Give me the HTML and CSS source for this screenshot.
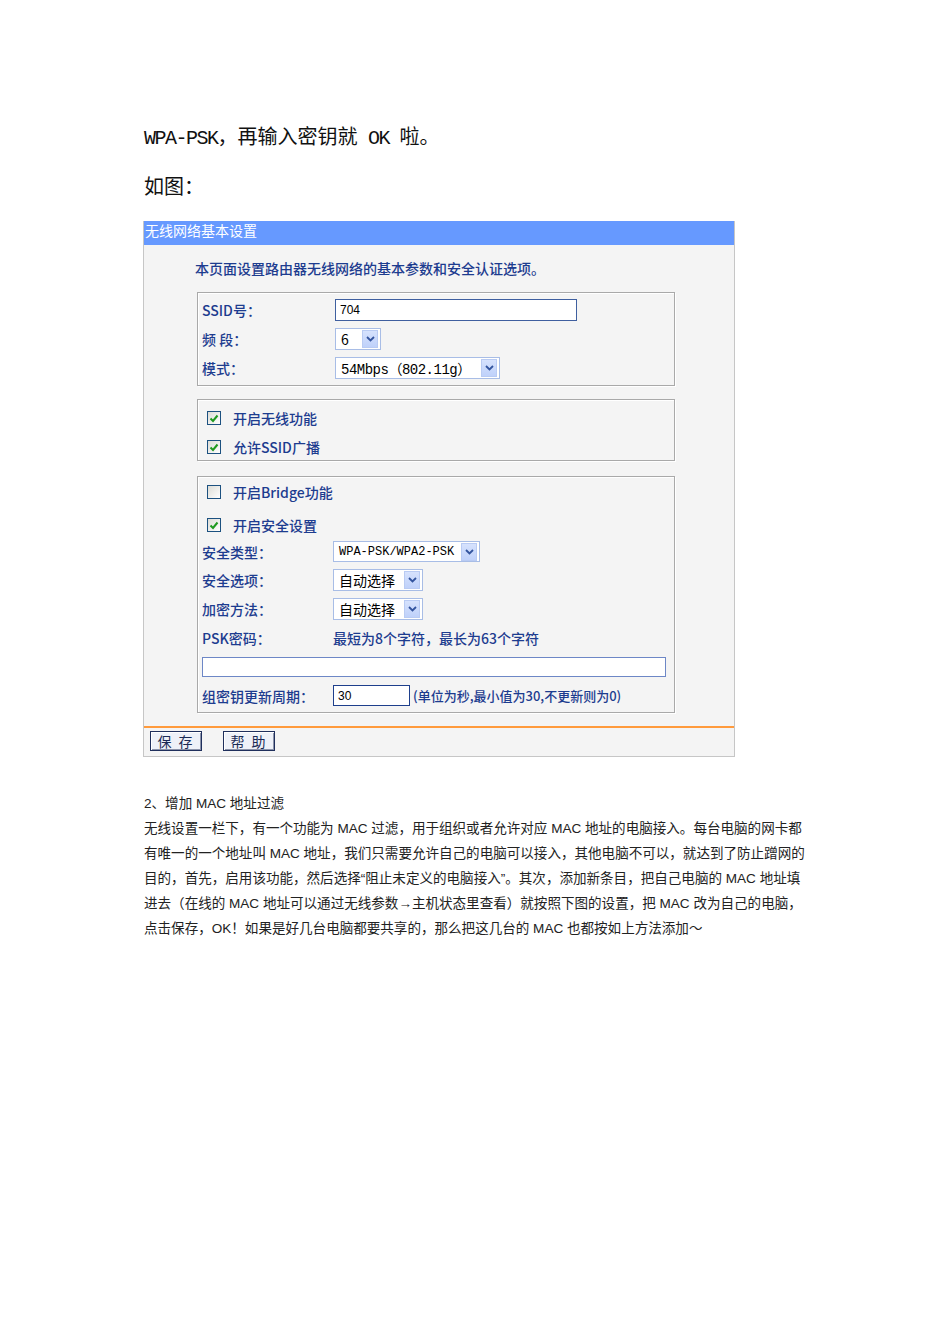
FILE: index.html
```html
<!DOCTYPE html>
<html lang="zh-CN">
<head>
    <meta charset="UTF-8">
    <title>无线网络基本设置</title>
    <link rel="stylesheet" href="styles.css">
</head>
<body>
    <div class="page">
        <p class="lead"><span class="en">WPA-PSK</span>，再输入密钥就<span class="en"> OK </span>啦。</p>
        <p class="lead second">如图：</p>

        <div class="panel">
            <div class="panel-title">无线网络基本设置</div>
            <div class="panel-body">
                <div class="intro">本页面设置路由器无线网络的基本参数和安全认证选项。</div>

                <div class="group group-basic">
                    <div class="row">
                        <span class="label">SSID号：</span>
                        <input class="text-input ssid" type="text" value="704">
                    </div>
                    <div class="row">
                        <span class="label">频 段：</span>
                        <div class="select sel-channel"><span class="sel-value">6</span><span class="sel-arrow"><svg width="9" height="6" viewBox="0 0 9 6"><polyline points="1,1 4.5,4.5 8,1" fill="none" stroke="#33549e" stroke-width="1.8"/></svg></span></div>
                    </div>
                    <div class="row">
                        <span class="label">模式：</span>
                        <div class="select sel-mode"><span class="sel-value mono">54Mbps（802.11g）</span><span class="sel-arrow"><svg width="9" height="6" viewBox="0 0 9 6"><polyline points="1,1 4.5,4.5 8,1" fill="none" stroke="#33549e" stroke-width="1.8"/></svg></span></div>
                    </div>
                </div>

                <div class="group group-wireless">
                    <div class="row check-row">
                        <span class="checkbox checked"><svg width="10" height="9" viewBox="0 0 10 9"><polyline points="1.5,4.5 4,7 8.5,1.5" fill="none" stroke="#1f9a1f" stroke-width="2"/></svg></span>
                        <span class="label">开启无线功能</span>
                    </div>
                    <div class="row check-row">
                        <span class="checkbox checked"><svg width="10" height="9" viewBox="0 0 10 9"><polyline points="1.5,4.5 4,7 8.5,1.5" fill="none" stroke="#1f9a1f" stroke-width="2"/></svg></span>
                        <span class="label">允许SSID广播</span>
                    </div>
                </div>

                <div class="group group-security">
                    <div class="row check-row r-bridge">
                        <span class="checkbox"></span>
                        <span class="label">开启Bridge功能</span>
                    </div>
                    <div class="row check-row r-secure">
                        <span class="checkbox checked"><svg width="10" height="9" viewBox="0 0 10 9"><polyline points="1.5,4.5 4,7 8.5,1.5" fill="none" stroke="#1f9a1f" stroke-width="2"/></svg></span>
                        <span class="label">开启安全设置</span>
                    </div>
                    <div class="row r-type">
                        <span class="label wide">安全类型：</span>
                        <div class="select sel-type"><span class="sel-value mono small">WPA-PSK/WPA2-PSK</span><span class="sel-arrow"><svg width="9" height="6" viewBox="0 0 9 6"><polyline points="1,1 4.5,4.5 8,1" fill="none" stroke="#33549e" stroke-width="1.8"/></svg></span></div>
                    </div>
                    <div class="row r-opt">
                        <span class="label wide">安全选项：</span>
                        <div class="select sel-auto"><span class="sel-value">自动选择</span><span class="sel-arrow"><svg width="9" height="6" viewBox="0 0 9 6"><polyline points="1,1 4.5,4.5 8,1" fill="none" stroke="#33549e" stroke-width="1.8"/></svg></span></div>
                    </div>
                    <div class="row r-opt">
                        <span class="label wide">加密方法：</span>
                        <div class="select sel-auto"><span class="sel-value">自动选择</span><span class="sel-arrow"><svg width="9" height="6" viewBox="0 0 9 6"><polyline points="1,1 4.5,4.5 8,1" fill="none" stroke="#33549e" stroke-width="1.8"/></svg></span></div>
                    </div>
                    <div class="row r-psk">
                        <span class="label wide">PSK密码：</span>
                        <span class="label">最短为8个字符，最长为63个字符</span>
                    </div>
                    <input class="text-input psk" type="text" value="">
                    <div class="row r-period">
                        <span class="label wide">组密钥更新周期：</span>
                        <input class="text-input period" type="text" value="30">
                        <span class="label note">(单位为秒,最小值为30,不更新则为0)</span>
                    </div>
                </div>
            </div>
            <div class="panel-foot">
                <button class="btn">保 存</button>
                <button class="btn">帮 助</button>
            </div>
        </div>

        <p class="article">
            2、增加 MAC 地址过滤<br>
            无线设置一栏下，有一个功能为 MAC 过滤，用于组织或者允许对应 MAC 地址的电脑接入。每台电脑的网卡都<br>
            有唯一的一个地址叫 MAC 地址，我们只需要允许自己的电脑可以接入，其他电脑不可以，就达到了防止蹭网的<br>
            目的，首先，启用该功能，然后选择“阻止未定义的电脑接入”。其次，添加新条目，把自己电脑的 MAC 地址填<br>
            进去（在线的 MAC 地址可以通过无线参数→主机状态里查看）就按照下图的设置，把 MAC 改为自己的电脑，<br>
            点击保存，OK！如果是好几台电脑都要共享的，那么把这几台的 MAC 也都按如上方法添加～
        </p>
    </div>
</body>
</html>
```
FILE: styles.css
```css
body {
    margin: 0;
    background: #fff;
    font-family: "Noto Sans CJK SC", sans-serif;
}
.page {
    padding: 121px 0 0 144px;
}
.lead {
    margin: 0;
    height: 30px;
    font-size: 20px;
    line-height: 30px;
    color: #111;
}
.lead.second {
    margin-top: 20px;
}
.en {
    font-family: "Liberation Mono", monospace;
    letter-spacing: -1.5px;
    line-height: 1;
}

/* router panel */
.panel {
    width: 590px;
    margin: 20px 0 0 -1px;
    background: #f4f4f4;
    border: 1px solid #c6c6c6;
    border-top: none;
}
.panel-title {
    height: 18px;
    line-height: 18px;
    padding: 0 0 6px 1px;
    background: #6699ff;
    color: #fff;
    font-size: 14px;
}
.panel-body {
    padding: 0 0 13px 53px;
}
.intro {
    height: 33px;
    padding-top: 14px;
    margin-left: -2px;
    line-height: 18px;
    font-size: 14px;
    color: #1d3c8f;
    font-weight: 500;
}
.group {
    box-sizing: border-box;
    width: 478px;
    border: 1px solid #a9a9a9;
    box-shadow: 1px 1px 0 #fff, inset 1px 1px 0 #fff;
}
.group-basic {
    padding: 6px 0 6px 4px;
}
.group-wireless {
    margin-top: 13px;
    padding: 7px 0 2px 9px;
}
.group-security {
    margin-top: 15px;
    padding: 4px 0 6px 4px;
}
.row {
    display: flex;
    align-items: center;
    height: 22px;
    margin-bottom: 7px;
}
.row:last-child {
    margin-bottom: 0;
}
.label {
    font-size: 14px;
    font-weight: 500;
    color: #1d3c8f;
    white-space: nowrap;
}
.group-basic .label {
    width: 133px;
}
.label.wide {
    width: 131px;
}
.check-row .label {
    margin-left: 12px;
}
.group-security .check-row {
    margin-left: 5px;
}
.r-bridge { margin-bottom: 11px; }
.r-secure { margin-bottom: 5px; }
.r-type { height: 21px; margin-bottom: 7px; }
.r-opt { margin-bottom: 7px; }
.r-psk { margin-bottom: 8px; }
.r-period { height: 21px; margin-top: 8px; }

.checkbox {
    display: inline-flex;
    align-items: center;
    justify-content: center;
    width: 12px;
    height: 12px;
    border: 1px solid #1c5180;
    background: linear-gradient(135deg, #dcdcd6, #fff);
}

.text-input {
    box-sizing: border-box;
    height: 22px;
    margin: 0;
    padding: 0 4px;
    border: 1px solid #3f5f9f;
    background: #fff;
    font-family: "Liberation Sans", sans-serif;
    font-size: 12px;
    color: #000;
    outline: none;
}
.ssid {
    width: 242px;
}
.psk {
    display: block;
    width: 464px;
    height: 20px;
    border-color: #6d87c6;
}
.period {
    width: 77px;
    height: 21px;
    border-color: #1e3f8c;
    margin-right: 3px;
}
.note {
    font-size: 13px;
}

.select {
    box-sizing: border-box;
    display: flex;
    align-items: center;
    justify-content: space-between;
    height: 22px;
    padding: 1px 2px 1px 5px;
    border: 1px solid #a8bde6;
    background: #fff;
}
.sel-value {
    font-size: 14px;
    color: #000;
    white-space: nowrap;
}
.sel-value.mono {
    font-family: "Liberation Mono", "Noto Sans CJK SC", monospace;
    font-size: 14px;
    letter-spacing: -0.5px;
}
.sel-value.small {
    font-size: 12px;
    letter-spacing: 0;
}
.sel-arrow {
    display: flex;
    align-items: center;
    justify-content: center;
    width: 16px;
    height: 18px;
    background: linear-gradient(#d6e2fd, #bfd1fa);
    border: 1px solid #b9cbf3;
    box-sizing: border-box;
}
.sel-channel { width: 46px; }
.sel-mode { width: 165px; }
.sel-type { width: 147px; height: 21px; }
.sel-auto { width: 90px; }

.panel-foot {
    height: 25px;
    border-top: 2px solid #ff9a3c;
    padding: 3px 0 0 6px;
    display: flex;
    gap: 21px;
    align-items: flex-start;
}
.btn {
    width: 52px;
    height: 20px;
    padding: 0;
    border: 1px solid #1f2f5c;
    background: #eef1f8;
    box-shadow: inset 1px 1px 0 #fff, inset -1px -1px 0 #8b93aa;
    font-family: "Noto Sans CJK SC", sans-serif;
    font-size: 14px;
    line-height: 16px;
    letter-spacing: 2px;
    color: #1a2a55;
}

.article {
    margin: 34px 0 0 0;
    font-family: "Liberation Sans", "Noto Sans CJK SC", sans-serif;
    font-size: 13.55px;
    line-height: 25px;
    color: #222;
    white-space: nowrap;
}
```
